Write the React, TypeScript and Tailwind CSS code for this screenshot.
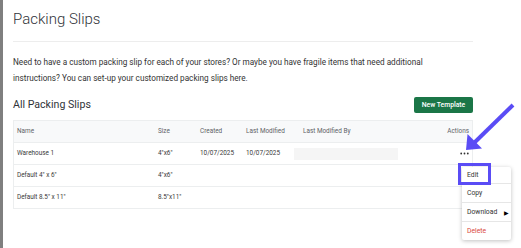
import * as React from "react";

const rows = [
  { name: "Warehouse 1", size: '4"x6"', created: "10/07/2025", modified: "10/07/2025", by: true, actions: true },
  { name: 'Default 4" x 6"', size: '4"x6"', created: "", modified: "", by: false, actions: false },
  { name: 'Default 8.5" x 11"', size: '8.5"x11"', created: "", modified: "", by: false, actions: false },
];

function Row({ children, header = false }: { children: React.ReactNode; header?: boolean }) {
  return (
    <div
      className={
        "grid grid-cols-[141px_42px_46px_57px_1fr] items-center h-[22px] border-b border-[#eceeef] " +
        (header ? "bg-[#f8f9fa] text-[#5f6367]" : "text-[#3a3a3a]")
      }
    >
      {children}
    </div>
  );
}

export default function App() {
  return (
    <div className="relative flex w-[521px] h-[248px] overflow-hidden bg-white font-['Roboto','Liberation_Sans',sans-serif]">
      <div className="w-[3px] bg-[#7f7f7f]" />
      <div className="w-[470px] pl-[10px]">
        <h1 className="pt-[9px] text-[15px] leading-[20px] font-light text-[#2f3338]">Packing Slips</h1>
        <div className="mt-[12px] h-px bg-[#ededed]" />
        <p className="mt-[12px] text-[8.2px] leading-[16px] text-[#333]">
          Need to have a custom packing slip for each of your stores? Or maybe you have fragile items that need additional
          <br />
          instructions? You can set-up your customized packing slips here.
        </p>
        <div className="mt-[11px] flex items-center justify-between">
          <h2 className="text-[10.6px] leading-[16px] text-[#2f3338]">All Packing Slips</h2>
          <button className="h-[16px] w-[59px] rounded-[2px] bg-[#1b7647] text-[6.8px] font-medium text-white">
            New Template
          </button>
        </div>
        <div className="mt-[7px] border border-b-0 border-[#eceeef] text-[6.4px]">
          <Row header>
            <span className="pl-[3px]">Name</span>
            <span className="pl-[3px]">Size</span>
            <span className="pl-[3px]">Created</span>
            <span className="pl-[3px]">Last Modified</span>
            <div className="flex justify-between pl-[3px] pr-[3px]">
              <span>Last Modified By</span>
              <span>Actions</span>
            </div>
          </Row>
          {rows.map((r) => (
            <Row key={r.name}>
              <span className="pl-[3px]">{r.name}</span>
              <span className="pl-[3px]">{r.size}</span>
              <span className="pl-[3px]">{r.created}</span>
              <span className="pl-[3px]">{r.modified}</span>
              <div className="flex items-center justify-between pr-[3px]">
                {r.by ? <div className="-ml-[6px] h-[12px] w-[104px] bg-[#f5f5f5]" /> : <span />}
                {r.actions && (
                  <svg width="9" height="3" viewBox="0 0 9 3" className="-mt-[1px]">
                    <circle cx="1.2" cy="1.5" r="0.9" fill="#333" />
                    <circle cx="4.5" cy="1.5" r="0.9" fill="#333" />
                    <circle cx="7.8" cy="1.5" r="0.9" fill="#333" />
                  </svg>
                )}
              </div>
            </Row>
          ))}
        </div>
      </div>

      {/* action menu */}
      <div className="absolute left-[462px] top-[167px] w-[49px] rounded-[2px] bg-white text-[6.8px] text-[#333] shadow-[0_1px_4px_rgba(0,0,0,0.25)]">
        <div className="flex h-[17px] items-center border-b border-[#e6e6e6] pl-[5px]">Edit</div>
        <div className="flex h-[19px] items-center border-b border-[#e6e6e6] pl-[5px]">Copy</div>
        <div className="flex h-[19px] items-center justify-between border-b border-[#e6e6e6] pl-[5px] pr-[2px]">
          <span>Download</span>
          <span className="text-[6px] text-black">&#9654;</span>
        </div>
        <div className="flex h-[18px] items-center pl-[5px] text-[#d9453d]">Delete</div>
      </div>

      {/* highlight box */}
      <div className="absolute left-[458px] top-[163px] h-[22px] w-[33px] border-[3px] border-[#5a4cf5]" />

      {/* arrow */}
      <svg className="absolute left-0 top-0" width="521" height="248" viewBox="0 0 521 248">
        <line x1="513" y1="105" x2="474" y2="143" stroke="#5a4cf5" strokeWidth="4" />
        <polygon points="466,150 467.5,134 482,148.5" fill="#5a4cf5" />
      </svg>
    </div>
  );
}
